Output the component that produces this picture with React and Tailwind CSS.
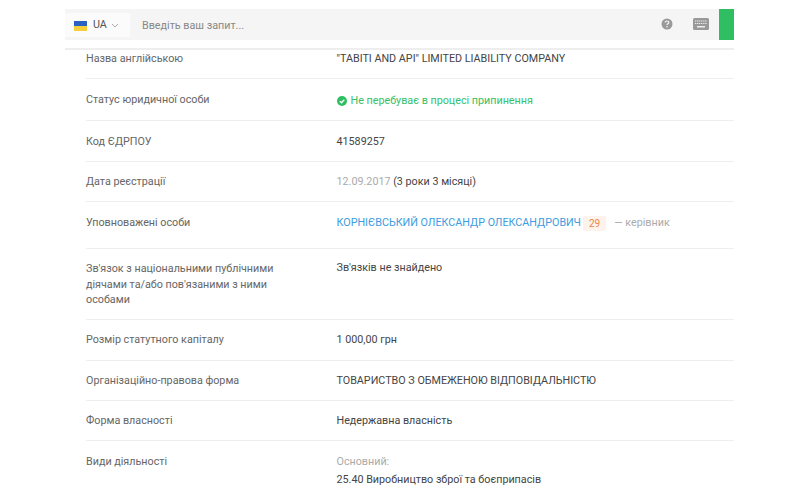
import React from "react";

function Row({ label, h, children, top = "pt-[13px]" }) {
  return (
    <div className={`flex border-b border-[#eeeeee] ${top}`} style={{ height: h }}>
      <div className="w-[250.5px] shrink-0 text-[#666666] leading-[15.5px] pr-[40px]">{label}</div>
      <div className="flex-1 text-[#444444] leading-[15.5px]">{children}</div>
    </div>
  );
}

export default function App() {
  return (
    <div className="w-[800px] h-[492px] overflow-hidden bg-white font-['Roboto',sans-serif] text-[10.75px] flex flex-col pl-[65px]">
      <div className="w-[669px] shrink-0 pt-[9px] h-[50px] border-b-2 border-[#eeeeee]">
        <div className="flex h-[31px] bg-[#f5f5f5] items-stretch">
          <div className="flex items-center w-[65px] mt-[4px] mb-[3px] pt-[1px] bg-[#fbfbfb] pl-[9px]">
            <svg width="13" height="10" viewBox="0 0 13 10">
              <rect width="13" height="5" fill="#2a62c4" />
              <rect y="5" width="13" height="5" fill="#f6cf3c" />
            </svg>
            <span className="ml-[6px] text-[#555555]">UA</span>
            <svg width="8" height="5" viewBox="0 0 8 5" className="ml-[4px]" fill="none" stroke="#aaaaaa" strokeWidth="1">
              <path d="M1 1l3 3 3-3" />
            </svg>
          </div>
          <div className="flex-1 flex items-center pl-[12px] pt-[3px] text-[#888888]">Введіть ваш запит...</div>
          <svg width="12" height="12" viewBox="0 0 12 12" className="self-center mr-[20px] mt-[-2px]">
            <circle cx="6" cy="6" r="5.5" fill="#999999" />
            <path d="M4.2 4.6c0-1 .8-1.6 1.8-1.6s1.8.6 1.8 1.5c0 1.3-1.8 1.3-1.8 2.5" fill="none" stroke="#f5f5f5" strokeWidth="1.2" />
            <circle cx="6" cy="8.8" r=".8" fill="#f5f5f5" />
          </svg>
          <svg width="16" height="12" viewBox="0 0 16 12" className="self-center mr-[10px] mt-[-2px]">
            <rect width="16" height="12" rx="1.5" fill="#999999" />
            <path d="M2 3h12M2 5.5h12" stroke="#eeeeee" strokeWidth="1.2" strokeDasharray="1.2 .7" />
            <rect x="4" y="8" width="8" height="1.5" fill="#eeeeee" />
          </svg>
          <div className="w-[15px] bg-[#2fbf62]" />
        </div>
      </div>
      <div className="w-[648px] ml-[21px] shrink-0">
        <Row label="Назва англійською" h={29} top="pt-[1px]">"TABITI AND API" LIMITED LIABILITY COMPANY</Row>
        <Row label="Статус юридичної особи" h={42} top="pt-[13px]">
          <div className="flex items-center text-[#35c069] mt-[1px]">
            <svg width="10" height="10" viewBox="0 0 10 10" className="mr-[4px]">
              <circle cx="5" cy="5" r="5" fill="#2fbf62" />
              <path d="M2.8 5.1l1.6 1.6 2.9-3" fill="none" stroke="#fff" strokeWidth="1.3" />
            </svg>
            Не перебуває в процесі припинення
          </div>
        </Row>
        <Row label="Код ЄДРПОУ" h={41}>41589257</Row>
        <Row label="Дата реєстрації" h={40} top="pt-[12px]">
          <span className="text-[#aaaaaa]">12.09.2017</span> (3 роки 3 місяці)
        </Row>
        <Row label="Уповноважені особи" h={47}>
          <div className="flex items-start">
            <span className="text-[#3d9be0]">КОРНІЄВСЬКИЙ ОЛЕКСАНДР ОЛЕКСАНДРОВИЧ</span>
            <span className="ml-[2px] px-[6px] h-[15px] mt-[1px] rounded-[2px] bg-[#fdf3ec] text-[#e8864a] text-[10px] leading-[16px]">29</span>
            <span className="ml-[8px] text-[#aaaaaa]">— керівник</span>
          </div>
        </Row>
        <Row label="Зв'язок з національними публічними діячами та/або пов'язаними з ними особами" h={71} top="pt-[12px]">
          <div className="mt-[-1px]">Зв'язків не знайдено</div>
        </Row>
        <Row label="Розмір статутного капіталу" h={41} top="pt-[12px]">1 000,00 грн</Row>
        <Row label="Організаційно-правова форма" h={40} top="pt-[12px]">ТОВАРИСТВО З ОБМЕЖЕНОЮ ВІДПОВІДАЛЬНІСТЮ</Row>
        <Row label="Форма власності" h={40} top="pt-[12px]">Недержавна власність</Row>
        <div className="flex pt-[13px]">
          <div className="w-[250.5px] shrink-0 text-[#666666] leading-[15.5px]">Види діяльності</div>
          <div className="flex-1">
            <div className="text-[#aaaaaa] leading-[15.5px]">Основний:</div>
            <div className="text-[#444444] leading-[15.5px] mt-[2px]">25.40 Виробництво зброї та боєприпасів</div>
          </div>
        </div>
      </div>
    </div>
  );
}
